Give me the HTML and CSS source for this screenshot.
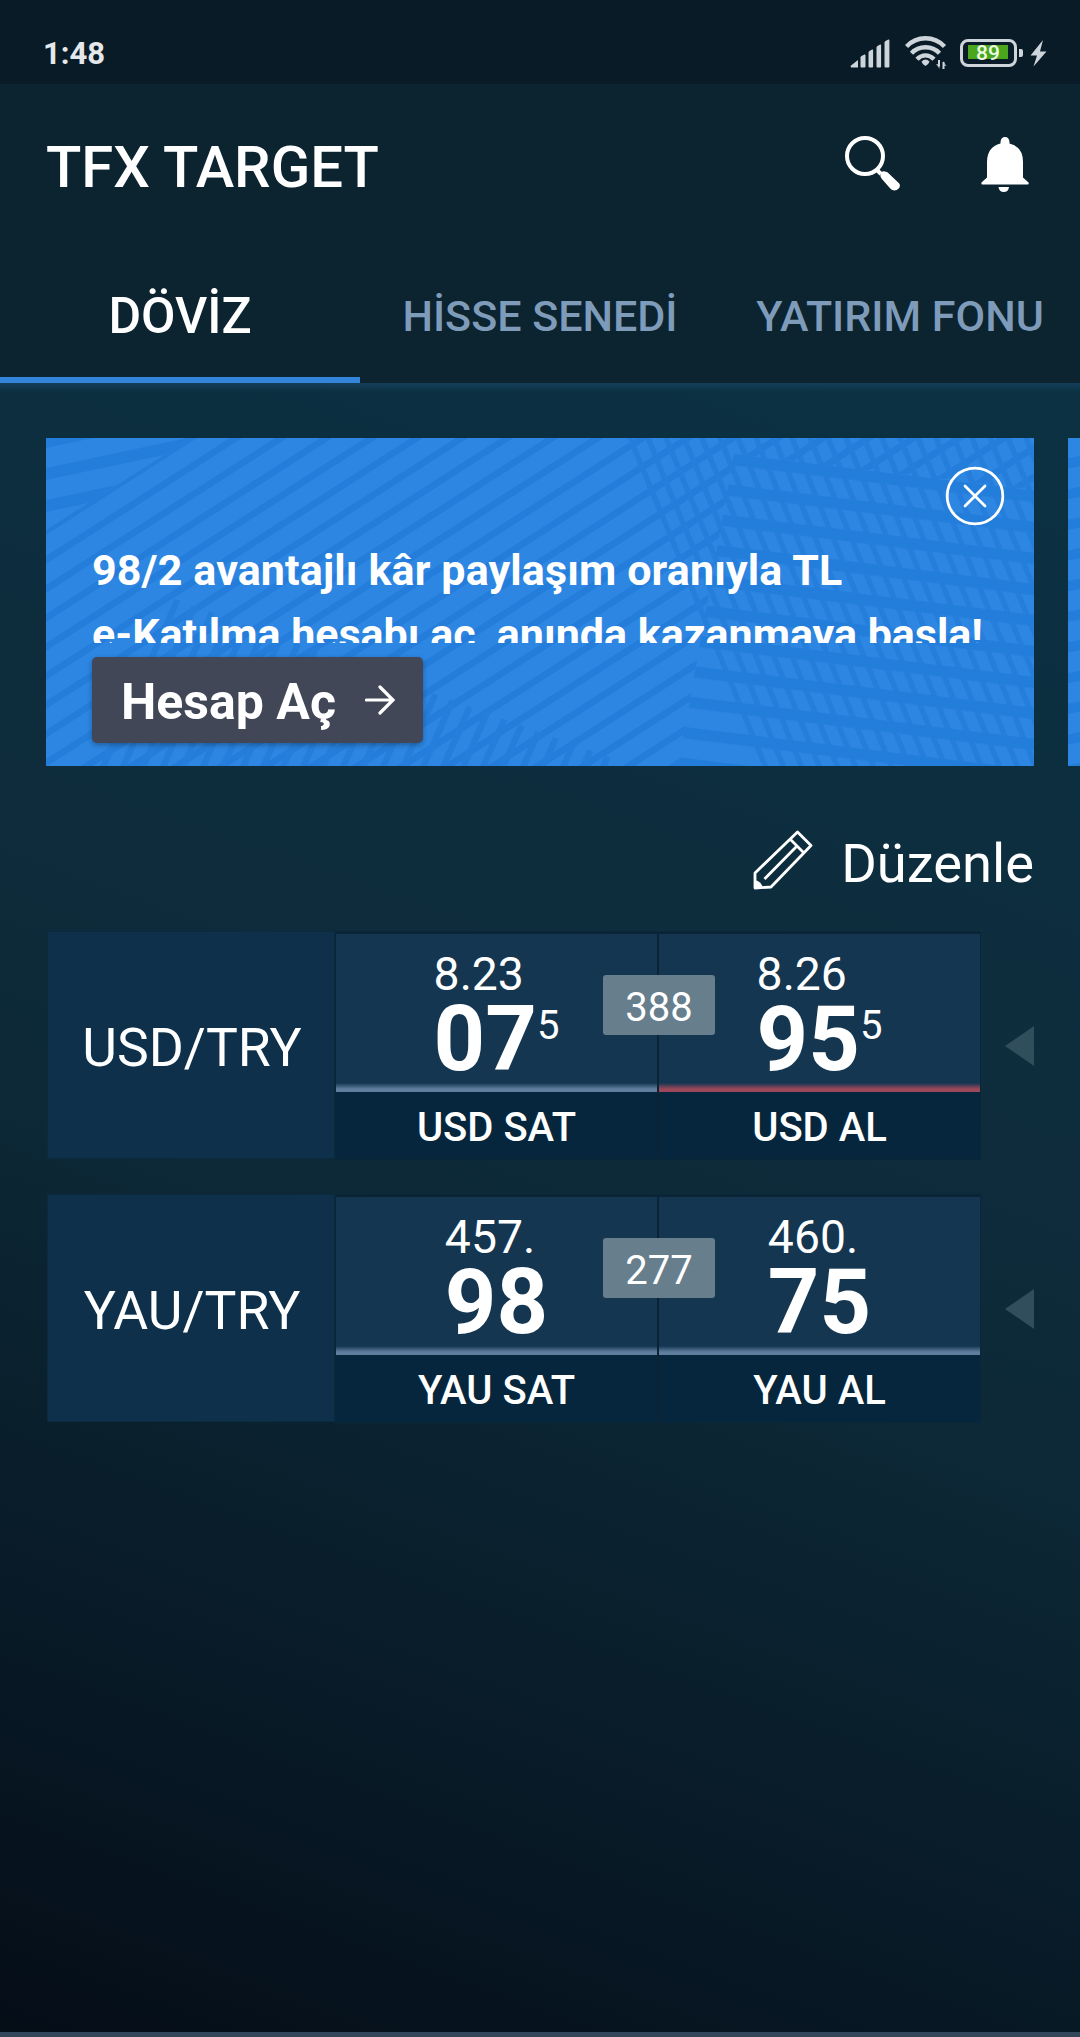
FILE: index.html
```html
<!DOCTYPE html>
<html lang="tr">
  <head>
    <meta charset="utf-8">
    <title>TFX TARGET</title>
    <link rel="stylesheet" href="styles.css">
  </head>
  <body>

    <div class="statusBar">
      <span class="time">1:48</span>
      <div class="statusIcons">
        <svg class="signal" width="40" height="29" viewBox="0 0 40 29">
          <path d="M1 26.500L8 21v7.500H2Q0 28.500 1 26.500z"/>
          <path d="M10.500 18.500q0-1 1-1.500l3-1.500q1-.3 1 .8V27.500q0 1-1 1h-3q-1 0-1-1z"/>
          <path d="M18.500 13.500q0-1 1-1.500l2.600-1.500q1-.3 1 .8V27.500q0 1-1 1h-2.600q-1 0-1-1z"/>
          <path d="M26.500 8.500q0-1 1-1.500l2.600-1.500q1-.3 1 .8V27.500q0 1-1 1h-2.600q-1 0-1-1z"/>
          <path d="M34.500 3.500q0-1 1-1.500l2.900-1.500q1-.3 1 .8V27.500q0 1-1 1h-2.900q-1 0-1-1z"/>
        </svg>
        <svg class="wifi" width="42" height="34" viewBox="0 0 42 34">
          <g fill="none" stroke="#cdd4da" stroke-width="4.400">
            <path d="M1.500 10.500C12-.5 29-.5 39.500 10.500"/>
            <path d="M6.500 17.200C14 9.300 27 9.300 34.500 17.200"/>
            <path d="M12 23.300C17 18 24 18 29 23.300"/>
          </g>
          <path d="M16.500 25.500q4-4 8 0-.5 2.500-4 4.500-3.500-2-4-4.500z"/>
          <path d="M34 24v6.500M38.500 26v7" stroke="#cdd4da" stroke-width="2" fill="none"/>
          <path d="M31 28l3.500 5V28zM41.500 30L38 25v5z" opacity=".7"/>
        </svg>
        <div class="battery"><span>89</span></div>
        <svg class="bolt" width="17" height="27" viewBox="0 0 17 27">
          <path d="M13 0L.5 15.500H7L3.500 26.500 16.500 11.500H10z"/>
        </svg>
      </div>
    </div>

    <header>
      <div class="appBar">
        <h1>TFX TARGET</h1>
        <svg class="search" width="56" height="56" viewBox="0 0 56 56">
          <circle cx="20" cy="20" r="18" fill="none" stroke="#fff" stroke-width="4"/>
          <path d="M32 34l4 4" stroke="#fff" stroke-width="4"/>
          <path d="M36 36.500q2-1.800 5-.8 1.500.3 2.500 1.500l10.500 10q2 2.500-.3 5.300-2.500 2.500-5.500 1.800-1.500-.3-2.500-1.300L36.500 42.500q-2-3 -.5-6z" fill="#fff"/>
        </svg>
        <svg class="bell" width="48" height="55" viewBox="0 0 48 55">
          <path d="M19.500 6.500V5Q20 0 24 0t4.500 5v1.500Q42 10 42 25v15.500l5.500 5q.8 2-.8 2H1.300Q0 47.500.5 45.500L6 40.500V25Q6 10 19.500 6.500z" fill="#fff"/>
          <path d="M17.500 50h10.500q-.5 5-5.200 5t-5.300-5z" fill="#fff"/>
        </svg>
      </div>
      <nav>
        <a class="tab active">DÖVİZ</a>
        <a class="tab">HİSSE SENEDİ</a>
        <a class="tab">YATIRIM FONU</a>
      </nav>
    </header>

    <main>
      <section class="carousel">
        <div class="banner">
          <svg class="stripes" width="988" height="328" viewBox="0 0 988 328">
            <defs>
              <pattern id="thin" width="60" height="29" patternUnits="userSpaceOnUse" patternTransform="translate(0 89) skewY(-32.700)">
                <rect width="60" height="8" fill="#247dda"/>
              </pattern>
              <pattern id="wide" width="60" height="31" patternUnits="userSpaceOnUse" patternTransform="translate(688 16) skewY(7)">
                <rect width="60" height="11.500" fill="#237dda"/>
              </pattern>
              <pattern id="corner" width="60" height="32" patternUnits="userSpaceOnUse" patternTransform="translate(0 30) skewY(-12)">
                <rect width="60" height="12" fill="#237dda"/>
              </pattern>
              <pattern id="hatch" width="18" height="60" patternUnits="userSpaceOnUse" patternTransform="translate(581 0) skewX(22.400)">
                <rect width="6" height="60" fill="#257edb"/>
              </pattern>
              <pattern id="grass" width="20" height="60" patternUnits="userSpaceOnUse" patternTransform="skewX(-24)">
                <rect width="7" height="60" fill="#257edb"/>
              </pattern>
            </defs>
            <path d="M145 0H988V52L688 16 632 328H0V92z" fill="url(#thin)"/>
            <path d="M0 0H145L0 92z" fill="url(#corner)"/>
            <path d="M581 0H988V328H716z" fill="url(#hatch)"/>
            <path d="M688 16L988 52V328H632z" fill="url(#wide)"/>
            <path d="M126 160L565 320 562 328H52z" fill="url(#grass)"/>
          </svg>
          <svg class="close" width="60" height="60" viewBox="0 0 60 60">
            <circle cx="30" cy="30" r="27.800"/>
            <path d="M20 20L40 40M40 20L20 40"/>
          </svg>
          <p><span>98/2 avantajlı kâr paylaşım oranıyla TL</span><br>e-Katılma hesabı aç, anında kazanmaya başla!</p>
          <button>Hesap Aç
            <svg width="30" height="30" viewBox="0 0 30 30"><path d="M1.500 15H27M15 2L28 15 15 28"/></svg>
          </button>
        </div>
        <div class="banner next"></div>
      </section>

      <div class="edit">
        <svg width="60" height="60" viewBox="0 0 60 60">
          <g fill="none" stroke="#fff" stroke-width="2.800">
            <path d="M44.500 2L58 15.500 18 57 2 58V43z" stroke-linejoin="round"/>
            <path d="M37.500 9.500L51 23M44 16L11.500 49"/>
          </g>
          <path d="M2 50q6 1 8 8l-8 .5z" fill="#fff"/>
        </svg>
        <span>Düzenle</span>
      </div>

      <section class="pair">
        <h2>USD/TRY</h2>
        <div class="prices">
          <div class="price">
            <div class="value"><div>8.23<br><b>07</b></div><sup>5</sup></div>
            <div class="action">USD SAT</div>
          </div>
          <div class="price down">
            <div class="value"><div>8.26<br><b>95</b></div><sup>5</sup></div>
            <div class="action">USD AL</div>
          </div>
          <span class="spread">388</span>
        </div>
        <i class="arrow"></i>
      </section>

      <section class="pair">
        <h2>YAU/TRY</h2>
        <div class="prices">
          <div class="price">
            <div class="value"><div>457.<br><b>98</b></div></div>
            <div class="action">YAU SAT</div>
          </div>
          <div class="price">
            <div class="value"><div>460.<br><b>75</b></div></div>
            <div class="action">YAU AL</div>
          </div>
          <span class="spread">277</span>
        </div>
        <i class="arrow"></i>
      </section>
    </main>

  </body>
</html>
```
FILE: styles.css
```css
* {
  box-sizing: border-box;
}
body {
  margin: 0;
  height: 2037px;
  display: flex;
  flex-direction: column;
  overflow: hidden;
  font-family: Roboto, sans-serif;
  background: #0c2431;
  color: white;
}
h1, h2, p {
  margin: 0;
  font-weight: normal;
}
svg {
  display: block;
  flex: none;
}

/* phone status bar */
.statusBar {
  height: 84px;
  padding: 22px 33px 0 43px;
  display: flex;
  align-items: center;
  justify-content: space-between;
  background: #091b26;
}
.time {
  font-size: 31px;
  font-weight: bold;
  color: #e4e8eb;
}
.statusIcons {
  display: flex;
  align-items: center;
  fill: #cdd4da;
}
.wifi {
  margin-left: 15px;
}
.battery {
  position: relative;
  width: 57px;
  height: 28px;
  margin-left: 13px;
  padding: 3px 4px;
  border: 3px solid #cdd4da;
  border-radius: 8px;
}
.battery span {
  display: block;
  width: 40px;
  height: 14px;
  margin-left: 1px;
  background: #4aa61c;
  color: #eefbe4;
  font-size: 21px;
  font-weight: 500;
  line-height: 17px;
  text-align: center;
}
.battery:after {
  content: "";
  position: absolute;
  right: -9px;
  top: 7px;
  width: 4px;
  height: 8px;
  border-radius: 0 2px 2px 0;
  background: #cdd4da;
}
.bolt {
  margin-left: 13px;
}

/* header */
header {
  height: 299px;
  background: #0c2330;
}
.appBar {
  height: 166px;
  padding: 0 51px 0 46px;
  display: flex;
  align-items: center;
}
h1 {
  flex: 1;
  font-size: 58px;
  font-weight: 500;
}
.search {
  margin: -6px 80px 0 0;
}
.bell {
  margin-top: -5px;
}
nav {
  display: flex;
  height: 133px;
}
.tab {
  width: 360px;
  text-align: center;
  line-height: 133px;
  font-size: 43px;
  font-weight: 500;
  color: #7f9bba;
}
.tab.active {
  font-size: 50px;
  color: white;
  box-shadow: inset 0 -6px #3385dc;
}

main {
  flex: 1;
  border-bottom: 5px solid #34475a;
  background:
    linear-gradient(#143f5b, rgba(20, 63, 91, 0)) 0 0 / 100% 9px no-repeat,
    linear-gradient(20deg, #050d17 0%, #071723 16%, #0a202d 32%, #0d2938 48%, #0e2c3c 62%, #0c2f40 82%, #0b3142 100%);
}

/* campaign banners */
.carousel {
  display: flex;
  gap: 34px;
  margin: 55px 0 0 46px;
  overflow: hidden;
}
.banner {
  position: relative;
  flex: none;
  width: 988px;
  height: 328px;
  padding: 100px 0 0 46px;
  background: #2c86e2;
}
.banner.next {
  background: repeating-linear-gradient(168deg, #2c86e2 0 20px, #237dda 20px 30px);
}
.stripes {
  position: absolute;
  left: 0;
  top: 0;
}
.close {
  position: absolute;
  right: 29px;
  top: 28px;
  fill: none;
  stroke: white;
  stroke-width: 2.8px;
  stroke-linecap: round;
}
.banner p {
  position: relative;
  height: 105px;
  overflow: hidden;
  font-size: 43px;
  font-weight: bold;
  line-height: 64.3px;
  white-space: nowrap;
}
.banner p span {
  letter-spacing: 0.13px;
}
.banner button {
  position: relative;
  display: flex;
  align-items: center;
  justify-content: space-between;
  width: 331px;
  height: 86px;
  margin-top: 14px;
  padding: 4px 28px 0 29px;
  border: 0;
  border-radius: 5px;
  background: #424757;
  box-shadow: 0 2px 5px rgba(0, 0, 0, 0.3);
  color: white;
  font: bold 50px Roboto, sans-serif;
}
.banner button svg {
  margin-top: -4px;
  fill: none;
  stroke: white;
  stroke-width: 3.2px;
  stroke-linecap: round;
}

.edit {
  display: flex;
  align-items: center;
  justify-content: flex-end;
  height: 166px;
  padding: 29px 46px 0 0;
  font-size: 54.3px;
}
.edit svg {
  margin: -8px 28px 0 0;
}

/* currency rows */
.pair {
  display: flex;
  align-items: flex-start;
  height: 227px;
  margin: 0 46px 36px 48px;
}
h2 {
  width: 286px;
  height: 226px;
  margin-right: 2px;
  padding: 3px 0 0 2px;
  background: #0f304a;
  box-shadow: 0 0 0 1px #0a2a3f;
  font-size: 53.5px;
  line-height: 226px;
  text-align: center;
}
.prices {
  position: relative;
  display: flex;
  gap: 2px;
  width: 644px;
  background: #0a2435;
  box-shadow: 0 0 0 1px #0a2739;
}
.price {
  width: 321px;
  margin-top: 2px;
}
.value {
  display: flex;
  justify-content: center;
  height: 158px;
  padding-top: 12px;
  background: linear-gradient(to top, #5f7e9d 3px, #143651 9px);
  font-size: 46.3px;
  line-height: 56px;
}
.down .value {
  background: linear-gradient(to top, #9c485a 3px, #143651 9px);
}
.value b {
  font-size: 90px;
  line-height: 76px;
}
.value sup {
  margin-top: 57px;
  font-size: 40px;
  line-height: 46px;
}
.action {
  height: 67px;
  padding-top: 4px;
  background: #05263c;
  font-size: 40px;
  font-weight: 500;
  line-height: 63px;
  text-align: center;
}
.spread {
  position: absolute;
  left: 267px;
  top: 43px;
  width: 112px;
  height: 60px;
  padding-top: 3px;
  border-radius: 3px;
  background: #677e8d;
  font-size: 40px;
  line-height: 60px;
  text-align: center;
}
.arrow {
  margin: 94px 0 0 auto;
  border: solid transparent;
  border-width: 20.5px 29px 20.5px 0;
  border-right-color: #304e5b;
}
```
